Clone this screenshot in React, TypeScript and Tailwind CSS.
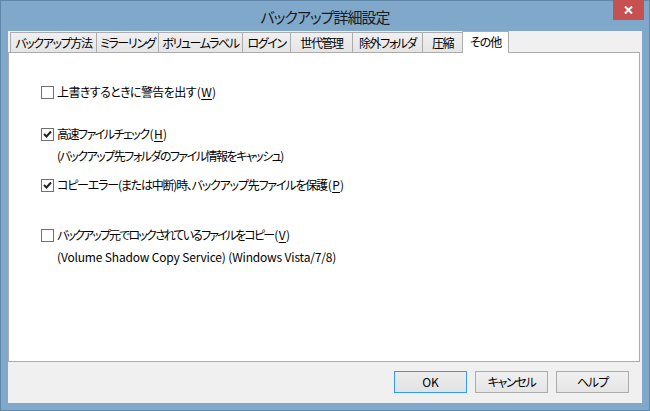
import React from "react";

const jp = "font-['Noto_Sans_CJK_JP',sans-serif] [font-feature-settings:'palt']";

function Check({ checked }: { checked: boolean }) {
  return (
    <div className="w-[13px] h-[13px] border border-[#707070] bg-white flex items-center justify-center shrink-0">
      {checked && (
        <svg width="9" height="8" viewBox="0 0 9 8">
          <path d="M1 4 L3.5 6.5 L8 1.5" stroke="#222" strokeWidth="2" fill="none" />
        </svg>
      )}
    </div>
  );
}

function Row({ checked, label, k, tr }: { checked: boolean; label: string; k: string; tr: string }) {
  return (
    <div className="h-[20px] flex items-center gap-[3px] pl-[32px]">
      <Check checked={checked} />
      <span className="text-[12px] text-black leading-none whitespace-nowrap">
        <span className={tr}>{label}</span>
        <span className="tracking-[0.3px] ml-px">(<span className="underline underline-offset-2">{k}</span>)</span>
      </span>
    </div>
  );
}

function Sub({ text, tr }: { text: string; tr: string }) {
  return (
    <div className="h-[20px] flex items-center pl-[48px]">
      <span className={`text-[12px] text-black leading-none whitespace-nowrap ${tr}`}>{text}</span>
    </div>
  );
}

const tabs = ["バックアップ方法", "ミラーリング", "ボリュームラベル", "ログイン", "世代管理", "除外フォルダ", "圧縮"];
const tabWidths = [87, 63, 85, 49, 63, 71, 41];

export default function App() {
  return (
    <div className={`w-[650px] h-[411px] bg-[#80a8cb] border border-[#5f87a9] flex flex-col ${jp}`}>
      <div className="relative h-[30px] flex items-center justify-center">
        <span className="text-[15px] text-[#1a1a1a] leading-none tracking-[-1px]">バックアップ詳細設定</span>
        <div className="absolute top-[-1px] right-[5px] w-[31px] h-[20px] bg-[#c75050] flex items-center justify-center">
          <svg width="9" height="8" viewBox="0 0 9 8">
            <path d="M1 0.5 L8 7.5 M8 0.5 L1 7.5" stroke="white" strokeWidth="2" />
          </svg>
        </div>
      </div>
      <div className="mx-[7px] h-[372px] bg-[#f0f0f0] flex flex-col">
        <div className="h-[21px] flex items-end pl-[2px] relative z-10">
          {tabs.map((t, i) => (
            <div
              key={t}
              style={{ width: tabWidths[i] }}
              className="h-[20px] shrink-0 -mr-px border border-b-0 border-[#acacac] bg-gradient-to-b from-[#f0f0f0] to-[#e5e5e5] flex items-center justify-center overflow-hidden text-[12px] text-black leading-none whitespace-nowrap tracking-[-1.4px]"
            >
              {t}
            </div>
          ))}
          <div className="w-[47px] h-[22px] shrink-0 border border-b-0 border-[#acacac] bg-white flex items-start pt-[4px] justify-center text-[12px] text-black leading-none mb-[-1px] tracking-[-1px]">
            その他
          </div>
        </div>
        <div className="w-[632px] h-[310px] bg-white border border-[#acacac] flex flex-col pt-[29px]">
          <Row checked={false} label="上書きするときに警告を出す" k="W" tr="tracking-[-0.6px]" />
          <div className="h-[22px]" />
          <Row checked={true} label="高速ファイルチェック" k="H" tr="tracking-[-1.5px]" />
          <div className="h-[2px]" />
          <Sub text="(バックアップ先フォルダのファイル情報をキャッシュ)" tr="tracking-[-1.5px]" />
          <div className="h-[9px]" />
          <Row checked={true} label="コピーエラー(または中断)時、バックアップ先ファイルを保護" k="P" tr="tracking-[-1.2px]" />
          <div className="h-[30px]" />
          <Row checked={false} label="バックアップ元でロックされているファイルをコピー" k="V" tr="tracking-[-1.85px]" />
          <div className="h-[2px]" />
          <Sub text="(Volume Shadow Copy Service) (Windows Vista/7/8)" tr="tracking-[-0.17px]" />
        </div>
        <div className="flex justify-end gap-[8px] pr-[13px] pt-[9px]">
          <div className="w-[73px] h-[22px] border border-[#3399ff] bg-gradient-to-b from-[#ececec] to-[#e3e3e3] flex items-center justify-center text-[12px] text-black leading-none">OK</div>
          <div className="w-[73px] h-[22px] border border-[#acacac] bg-gradient-to-b from-[#f0f0f0] to-[#e5e5e5] flex items-center justify-center text-[12px] text-black leading-none tracking-[-1.3px]">キャンセル</div>
          <div className="w-[73px] h-[22px] border border-[#acacac] bg-gradient-to-b from-[#f0f0f0] to-[#e5e5e5] flex items-center justify-center text-[12px] text-black leading-none tracking-[-1px]">ヘルプ</div>
        </div>
      </div>
    </div>
  );
}
